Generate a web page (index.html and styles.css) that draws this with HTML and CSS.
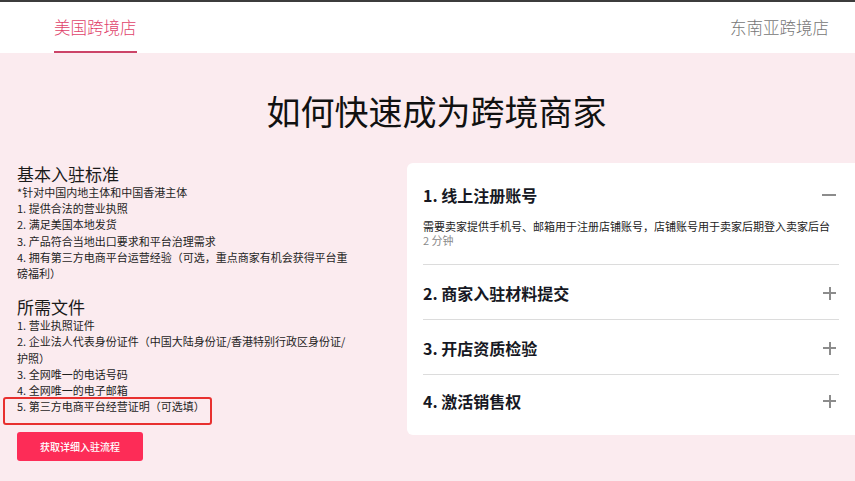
FILE: index.html
```html
<!DOCTYPE html>
<html lang="zh-CN">
<head>
<meta charset="utf-8">
<title>如何快速成为跨境商家</title>
<link rel="stylesheet" href="styles.css">
</head>
<body>
<div class="topline"></div>
<header class="tabs">
  <div class="tab active">美国跨境店</div>
  <div class="tab">东南亚跨境店</div>
</header>
<main class="main">
  <h1 class="title">如何快速成为跨境商家</h1>
  <div class="content">
    <section class="left">
      <h2 class="sub">基本入驻标准</h2>
      <div class="lines">
        <p>*针对中国内地主体和中国香港主体</p>
        <p>1. 提供合法的营业执照</p>
        <p>2. 满足美国本地发货</p>
        <p>3. 产品符合当地出口要求和平台治理需求</p>
        <p>4. 拥有第三方电商平台运营经验（可选，重点商家有机会获得平台重磅福利）</p>
      </div>
      <h2 class="sub sub2">所需文件</h2>
      <div class="lines">
        <p>1. 营业执照证件</p>
        <p>2. 企业法人代表身份证件（中国大陆身份证/香港特别行政区身份证/<br>护照）</p>
        <p>3. 全网唯一的电话号码</p>
        <p>4. 全网唯一的电子邮箱</p>
        <p class="marked">5. 第三方电商平台经营证明（可选填）<span class="mark"></span></p>
      </div>
      <button class="btn">获取详细入驻流程</button>
    </section>
    <section class="card">
      <div class="item open">
        <div class="item-head">
          <span>1. 线上注册账号</span>
          <span class="ico minus"></span>
        </div>
        <div class="item-body">
          <p>需要卖家提供手机号、邮箱用于注册店铺账号，店铺账号用于卖家后期登入卖家后台</p>
          <p class="time">2 分钟</p>
        </div>
      </div>
      <div class="item">
        <div class="item-head">
          <span>2. 商家入驻材料提交</span>
          <span class="ico plus"></span>
        </div>
      </div>
      <div class="item">
        <div class="item-head">
          <span>3. 开店资质检验</span>
          <span class="ico plus"></span>
        </div>
      </div>
      <div class="item last">
        <div class="item-head">
          <span>4. 激活销售权</span>
          <span class="ico plus"></span>
        </div>
      </div>
    </section>
  </div>
</main>
</body>
</html>
```
FILE: styles.css
```css
html, body {
  margin: 0;
  padding: 0;
  height: 100%;
}
body {
  font-family: "Noto Sans CJK SC", "Noto Sans", sans-serif;
  color: #222;
  background: #fbebef;
  overflow: hidden;
}
.topline {
  height: 2px;
  background: #3c3c3c;
}
.tabs {
  height: 51px;
  background: #fff;
  display: flex;
  justify-content: space-between;
  padding: 0 26px 0 54px;
}
.tab {
  box-sizing: border-box;
  height: 51px;
  display: flex;
  align-items: center;
  font-size: 16.5px;
  font-weight: 300;
  color: #767676;
  border-bottom: 2px solid transparent;
  padding-top: 1px;
}
.tab.active {
  color: #e0426a;
  border-bottom-color: #cc4468;
}
.main {
  padding-top: 38px;
}
.title {
  margin: 0;
  padding-left: 18px;
  text-align: center;
  font-size: 34px;
  line-height: 40px;
  font-weight: 400;
  color: #111;
}
.content {
  display: flex;
  justify-content: space-between;
  align-items: flex-start;
  margin-top: 32px;
  padding-left: 17px;
}
.left {
  width: 338px;
  position: relative;
}
.sub {
  margin: 0;
  font-size: 17px;
  line-height: 21px;
  font-weight: 400;
  color: #1a1a1a;
}
.sub2 {
  margin-top: 15px;
}
.lines p {
  margin: 0;
  font-size: 11px;
  line-height: 16.2px;
  color: #1e1e1e;
}
.marked {
  position: relative;
}
.mark {
  position: absolute;
  left: -14px;
  top: -1px;
  width: 205px;
  height: 24px;
  border: 2px solid #e8302f;
  border-radius: 3px;
}
.btn {
  display: block;
  margin-top: 18px;
  width: 126px;
  height: 29px;
  border: 0;
  border-radius: 3px;
  background: #fd2c57;
  color: #fff;
  font-family: "Noto Sans CJK SC", sans-serif;
  font-size: 10px;
  font-weight: 500;
  padding: 0;
}
.card {
  flex-shrink: 0;
  width: 448px;
  box-sizing: border-box;
  background: #fff;
  border-radius: 6px 0 0 6px;
  padding: 4px 16px 8px 16px;
}
.item {
  padding: 17px 0 15px;
  border-bottom: 1px solid #dcdcdc;
}
.item.last {
  border-bottom: 0;
  padding-top: 15px;
}
.item-head {
  display: flex;
  justify-content: space-between;
  align-items: center;
  height: 22px;
  font-size: 16px;
  font-weight: 700;
  color: #161823;
}
.item-body {
  margin-top: 13px;
  padding-bottom: 2px;
}
.item-body p {
  margin: 0;
  font-size: 11px;
  line-height: 14px;
  color: #222;
}
.item-body .time {
  color: #8a8a8a;
}
.ico {
  position: relative;
  width: 13px;
  height: 13px;
  margin-right: 3px;
}
.ico::before,
.ico::after {
  content: "";
  position: absolute;
  background: #8c8c8c;
}
.minus {
  width: 14px;
}
.minus::before {
  left: 0;
  right: 0;
  top: 5.5px;
  height: 2px;
}
.minus::after {
  display: none;
}
.plus::before {
  left: 0;
  right: 0;
  top: 5.5px;
  height: 2px;
}
.plus::after {
  top: 0;
  bottom: 0;
  left: 5.5px;
  width: 2px;
}
```
